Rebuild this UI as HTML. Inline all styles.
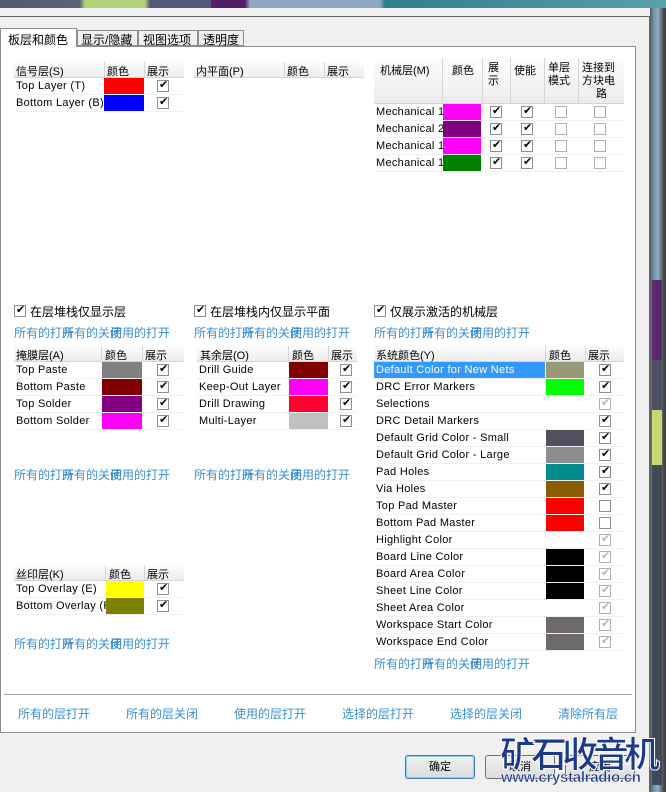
<!DOCTYPE html>
<html><head><meta charset="utf-8"><style>
*{margin:0;padding:0;box-sizing:border-box}
body{width:666px;height:792px;position:relative;overflow:hidden;background:#f0f0f0;font-family:"Liberation Sans","Noto Sans CJK SC",sans-serif;font-size:11px;color:#000}
.a{position:absolute}
.hdr{position:absolute;background:linear-gradient(#fdfdfd,#ececec);border-bottom:1px solid #d5d5d5;height:16px}
.hdr span{position:absolute;top:1px;font-size:11px;white-space:nowrap}
.hdr i{position:absolute;top:0;width:1px;height:16px;background:#d5d5d5}
.row{position:absolute;height:17px;border-bottom:1px solid #f0f0f0;white-space:nowrap;overflow:hidden}
.row span{position:absolute;left:2px;top:2px;letter-spacing:.3px}
.sw{position:absolute;top:0;height:16px}
.cb{position:absolute;width:12px;height:12px;border:1px solid #8e8f8f;background:#fff;top:2px}
.cb.k::after{content:"✔";position:absolute;left:1px;top:-3px;font-size:11px;color:#000;font-family:"DejaVu Sans",sans-serif}
.cb.g::after{content:"✔";position:absolute;left:1px;top:-3px;font-size:11px;color:#b5b5b5;font-family:"DejaVu Sans",sans-serif}
.cb.e{border-color:#b0b0b0}
.lnk{position:absolute;color:#3a8fd0;font-size:12px;white-space:nowrap}
.btn{position:absolute;top:755px;width:70px;height:24px;border:1px solid #707070;border-radius:3px;background:linear-gradient(#f2f2f2,#dcdcdc);text-align:center;line-height:22px;font-size:11px}
</style></head><body>
<div class="a" style="left:0;top:0;width:666px;height:8px;background:linear-gradient(90deg,#4e5a6e 0,#5a6478 80px,#b2d27a 85px,#b2d27a 145px,#535878 150px,#535878 210px,#541e66 212px,#541e66 245px,#8fa7c2 250px,#8fa7c2 380px,#2e7f8d 385px,#5aa0a8 666px)"></div>
<div class="a" style="left:0;top:8px;width:650px;height:784px;background:#f0f0f0"></div>
<div class="a" style="left:650px;top:8px;width:16px;height:784px;background:linear-gradient(90deg,#555 0,#6a8ea0 3px,#8fb0c4 8px,#444 14px)"></div>
<div class="a" style="left:652px;top:280px;width:10px;height:80px;background:#5a2a6c"></div>
<div class="a" style="left:652px;top:360px;width:10px;height:50px;background:#4e5068"></div>
<div class="a" style="left:652px;top:410px;width:10px;height:55px;background:#c8d870"></div>
<div class="a" style="left:652px;top:465px;width:10px;height:320px;background:#3e4a58"></div>
<div class="a" style="left:0;top:16px;width:650px;height:1px;background:#666"></div>
<div class="a" style="left:649px;top:16px;width:1px;height:776px;background:#666"></div>
<div class="a" style="left:0;top:28px;width:77px;height:19px;background:#fff;border:1px solid #898c95;border-bottom:none;z-index:2;font-size:12px;padding:2px 0 0 7px">板层和颜色</div>
<div class="a" style="left:77px;top:30px;width:61px;height:16px;background:#f0f0f0;border:1px solid #898c95;font-size:12px;padding:0 0 0 3px">显示/隐藏</div>
<div class="a" style="left:138px;top:30px;width:60px;height:16px;background:#f0f0f0;border:1px solid #898c95;font-size:12px;padding:0 0 0 4px">视图选项</div>
<div class="a" style="left:198px;top:30px;width:46px;height:16px;background:#f0f0f0;border:1px solid #898c95;font-size:12px;padding:0 0 0 4px">透明度</div>
<div class="a" style="left:0;top:46px;width:636px;height:687px;background:#fff;border:1px solid #898c95"></div>

<div class="hdr" style="left:14px;top:62px;width:170px"><span style="left:2px">信号层(S)</span><i style="left:90px"></i><span style="left:93px">颜色</span><i style="left:130px"></i><span style="left:133px">展示</span></div>
<div class="row" style="left:14px;top:78px;width:170px"><span>Top Layer (T)</span><div class="sw" style="left:90px;width:40px;background:#ff0000"></div><div class="cb k" style="left:143px"></div></div>
<div class="row" style="left:14px;top:95px;width:170px"><span>Bottom Layer (B)</span><div class="sw" style="left:90px;width:40px;background:#0000ff"></div><div class="cb k" style="left:143px"></div></div>
<div class="hdr" style="left:194px;top:62px;width:170px"><span style="left:2px">内平面(P)</span><i style="left:90px"></i><span style="left:93px">颜色</span><i style="left:130px"></i><span style="left:133px">展示</span></div>
<div class="hdr" style="left:374px;top:58px;width:250px;height:46px"><span style="left:6px;top:4px">机械层(M)</span><i style="left:68px;height:46px"></i><span style="left:78px;top:4px">颜色</span><i style="left:108px;height:46px"></i><span style="left:114px;top:4px;line-height:13px">展<br>示</span><i style="left:136px;height:46px"></i><span style="left:140px;top:4px">使能</span><i style="left:170px;height:46px"></i><span style="left:174px;top:4px;line-height:13px">单层<br>模式</span><i style="left:204px;height:46px"></i><span style="left:208px;top:4px;line-height:13px;text-align:center">连接到<br>方块电<br>&nbsp;&nbsp;路</span></div>
<div class="row" style="left:374px;top:104px;width:250px"><span>Mechanical 1</span><div class="sw" style="left:69px;width:38px;background:#ff00ff"></div><div class="cb k" style="left:116px"></div><div class="cb k" style="left:147px"></div><div class="cb e" style="left:181px"></div><div class="cb e" style="left:220px"></div></div>
<div class="row" style="left:374px;top:121px;width:250px"><span>Mechanical 2</span><div class="sw" style="left:69px;width:38px;background:#800080"></div><div class="cb k" style="left:116px"></div><div class="cb k" style="left:147px"></div><div class="cb e" style="left:181px"></div><div class="cb e" style="left:220px"></div></div>
<div class="row" style="left:374px;top:138px;width:250px"><span>Mechanical 1</span><div class="sw" style="left:69px;width:38px;background:#ff00ff"></div><div class="cb k" style="left:116px"></div><div class="cb k" style="left:147px"></div><div class="cb e" style="left:181px"></div><div class="cb e" style="left:220px"></div></div>
<div class="row" style="left:374px;top:155px;width:250px"><span>Mechanical 1</span><div class="sw" style="left:69px;width:38px;background:#008000"></div><div class="cb k" style="left:116px"></div><div class="cb k" style="left:147px"></div><div class="cb e" style="left:181px"></div><div class="cb e" style="left:220px"></div></div>

<div class="cb k" style="left:14px;top:305px"></div><div class="a" style="left:30px;top:303px;font-size:12px">在层堆栈仅显示层</div>
<div class="cb k" style="left:194px;top:305px"></div><div class="a" style="left:210px;top:303px;font-size:12px">在层堆栈内仅显示平面</div>
<div class="cb k" style="left:374px;top:305px"></div><div class="a" style="left:390px;top:303px;font-size:12px">仅展示激活的机械层</div>

<div class="lnk" style="left:14px;top:324px">所有的打开</div><div class="lnk" style="left:62px;top:324px">所有的关闭</div><div class="lnk" style="left:110px;top:324px">使用的打开</div>
<div class="lnk" style="left:194px;top:324px">所有的打开</div><div class="lnk" style="left:242px;top:324px">所有的关闭</div><div class="lnk" style="left:290px;top:324px">使用的打开</div>
<div class="lnk" style="left:374px;top:324px">所有的打开</div><div class="lnk" style="left:422px;top:324px">所有的关闭</div><div class="lnk" style="left:470px;top:324px">使用的打开</div>

<div class="hdr" style="left:14px;top:346px;width:170px"><span style="left:2px">掩膜层(A)</span><i style="left:87px"></i><span style="left:91px">颜色</span><i style="left:128px"></i><span style="left:131px">展示</span></div>
<div class="row" style="left:14px;top:362px;width:170px"><span>Top Paste</span><div class="sw" style="left:88px;width:40px;background:#808080"></div><div class="cb k" style="left:143px"></div></div>
<div class="row" style="left:14px;top:379px;width:170px"><span>Bottom Paste</span><div class="sw" style="left:88px;width:40px;background:#800000"></div><div class="cb k" style="left:143px"></div></div>
<div class="row" style="left:14px;top:396px;width:170px"><span>Top Solder</span><div class="sw" style="left:88px;width:40px;background:#800080"></div><div class="cb k" style="left:143px"></div></div>
<div class="row" style="left:14px;top:413px;width:170px"><span>Bottom Solder</span><div class="sw" style="left:88px;width:40px;background:#ff00ff"></div><div class="cb k" style="left:143px"></div></div>
<div class="hdr" style="left:197px;top:346px;width:160px"><span style="left:3px">其余层(O)</span><i style="left:91px"></i><span style="left:95px">颜色</span><i style="left:131px"></i><span style="left:134px">展示</span></div>
<div class="row" style="left:197px;top:362px;width:160px"><span>Drill Guide</span><div class="sw" style="left:92px;width:39px;background:#800000"></div><div class="cb k" style="left:143px"></div></div>
<div class="row" style="left:197px;top:379px;width:160px"><span>Keep-Out Layer</span><div class="sw" style="left:92px;width:39px;background:#ff00ff"></div><div class="cb k" style="left:143px"></div></div>
<div class="row" style="left:197px;top:396px;width:160px"><span>Drill Drawing</span><div class="sw" style="left:92px;width:39px;background:#ff0030"></div><div class="cb k" style="left:143px"></div></div>
<div class="row" style="left:197px;top:413px;width:160px"><span>Multi-Layer</span><div class="sw" style="left:92px;width:39px;background:#c0c0c0"></div><div class="cb k" style="left:143px"></div></div>
<div class="hdr" style="left:374px;top:346px;width:250px"><span style="left:2px">系统颜色(Y)</span><i style="left:171px"></i><span style="left:175px">颜色</span><i style="left:211px"></i><span style="left:214px">展示</span></div>
<div class="row" style="left:374px;top:362px;width:250px"><span style="left:0;top:0;width:171px;height:16px;background:#3399ff;color:#fff;padding:2px 0 0 2px">Default Color for New Nets</span><div class="sw" style="left:172px;width:38px;background:#999977"></div><div class="cb k" style="left:225px"></div></div>
<div class="row" style="left:374px;top:379px;width:250px"><span>DRC Error Markers</span><div class="sw" style="left:172px;width:38px;background:#00ff00"></div><div class="cb k" style="left:225px"></div></div>
<div class="row" style="left:374px;top:396px;width:250px"><span>Selections</span><div class="cb g e" style="left:225px"></div></div>
<div class="row" style="left:374px;top:413px;width:250px"><span>DRC Detail Markers</span><div class="cb k" style="left:225px"></div></div>
<div class="row" style="left:374px;top:430px;width:250px"><span>Default Grid Color - Small</span><div class="sw" style="left:172px;width:38px;background:#505060"></div><div class="cb k" style="left:225px"></div></div>
<div class="row" style="left:374px;top:447px;width:250px"><span>Default Grid Color - Large</span><div class="sw" style="left:172px;width:38px;background:#8f8c90"></div><div class="cb k" style="left:225px"></div></div>
<div class="row" style="left:374px;top:464px;width:250px"><span>Pad Holes</span><div class="sw" style="left:172px;width:38px;background:#008c8c"></div><div class="cb k" style="left:225px"></div></div>
<div class="row" style="left:374px;top:481px;width:250px"><span>Via Holes</span><div class="sw" style="left:172px;width:38px;background:#8c5c00"></div><div class="cb k" style="left:225px"></div></div>
<div class="row" style="left:374px;top:498px;width:250px"><span>Top Pad Master</span><div class="sw" style="left:172px;width:38px;background:#ff0000"></div><div class="cb" style="left:225px"></div></div>
<div class="row" style="left:374px;top:515px;width:250px"><span>Bottom Pad Master</span><div class="sw" style="left:172px;width:38px;background:#ff0000"></div><div class="cb" style="left:225px"></div></div>
<div class="row" style="left:374px;top:532px;width:250px"><span>Highlight Color</span><div class="cb g e" style="left:225px"></div></div>
<div class="row" style="left:374px;top:549px;width:250px"><span>Board Line Color</span><div class="sw" style="left:172px;width:38px;background:#000"></div><div class="cb g e" style="left:225px"></div></div>
<div class="row" style="left:374px;top:566px;width:250px"><span>Board Area Color</span><div class="sw" style="left:172px;width:38px;background:#000"></div><div class="cb g e" style="left:225px"></div></div>
<div class="row" style="left:374px;top:583px;width:250px"><span>Sheet Line Color</span><div class="sw" style="left:172px;width:38px;background:#000"></div><div class="cb g e" style="left:225px"></div></div>
<div class="row" style="left:374px;top:600px;width:250px"><span>Sheet Area Color</span><div class="cb g e" style="left:225px"></div></div>
<div class="row" style="left:374px;top:617px;width:250px"><span>Workspace Start Color</span><div class="sw" style="left:172px;width:38px;background:#6e6a6a"></div><div class="cb g e" style="left:225px"></div></div>
<div class="row" style="left:374px;top:634px;width:250px"><span>Workspace End Color</span><div class="sw" style="left:172px;width:38px;background:#6e6a6a"></div><div class="cb g e" style="left:225px"></div></div>
<div class="lnk" style="left:374px;top:655px">所有的打开</div><div class="lnk" style="left:422px;top:655px">所有的关闭</div><div class="lnk" style="left:470px;top:655px">使用的打开</div>

<div class="lnk" style="left:14px;top:466px">所有的打开</div><div class="lnk" style="left:62px;top:466px">所有的关闭</div><div class="lnk" style="left:110px;top:466px">使用的打开</div>
<div class="lnk" style="left:194px;top:466px">所有的打开</div><div class="lnk" style="left:242px;top:466px">所有的关闭</div><div class="lnk" style="left:290px;top:466px">使用的打开</div>

<div class="hdr" style="left:14px;top:565px;width:170px"><span style="left:2px">丝印层(K)</span><i style="left:91px"></i><span style="left:95px">颜色</span><i style="left:130px"></i><span style="left:133px">展示</span></div>
<div class="row" style="left:14px;top:581px;width:170px"><span>Top Overlay (E)</span><div class="sw" style="left:92px;width:38px;background:#ffff00"></div><div class="cb k" style="left:143px"></div></div>
<div class="row" style="left:14px;top:598px;width:170px"><span>Bottom Overlay (F</span><div class="sw" style="left:92px;width:38px;background:#808000"></div><div class="cb k" style="left:143px"></div></div>
<div class="lnk" style="left:14px;top:635px">所有的打开</div><div class="lnk" style="left:62px;top:635px">所有的关闭</div><div class="lnk" style="left:110px;top:635px">使用的打开</div>

<div class="a" style="left:4px;top:694px;width:628px;height:1px;background:#a0a0a0"></div>
<div class="lnk" style="left:18px;top:705px">所有的层打开</div>
<div class="lnk" style="left:126px;top:705px">所有的层关闭</div>
<div class="lnk" style="left:234px;top:705px">使用的层打开</div>
<div class="lnk" style="left:342px;top:705px">选择的层打开</div>
<div class="lnk" style="left:450px;top:705px">选择的层关闭</div>
<div class="lnk" style="left:558px;top:705px">清除所有层</div>

<div class="btn" style="left:405px;border-color:#3c7fb1;box-shadow:inset 0 0 0 1px #8fd0f0">确定</div>
<div class="btn" style="left:485px">取消</div>
<div class="btn" style="left:565px">应用</div>
<div class="a" style="left:500px;top:732px;font-size:36px;font-weight:bold;color:#1c3a8c;letter-spacing:-5px;line-height:40px;font-family:'Noto Sans CJK SC',sans-serif;-webkit-text-stroke:1px #fff;white-space:nowrap">矿石收音机</div>
<div class="a" style="left:501px;top:769px;font-size:15px;font-weight:bold;color:#1c3a8c;white-space:nowrap;-webkit-text-stroke:0.4px #fff;letter-spacing:-0.3px">www.crystalradio.cn</div>
</body></html>
